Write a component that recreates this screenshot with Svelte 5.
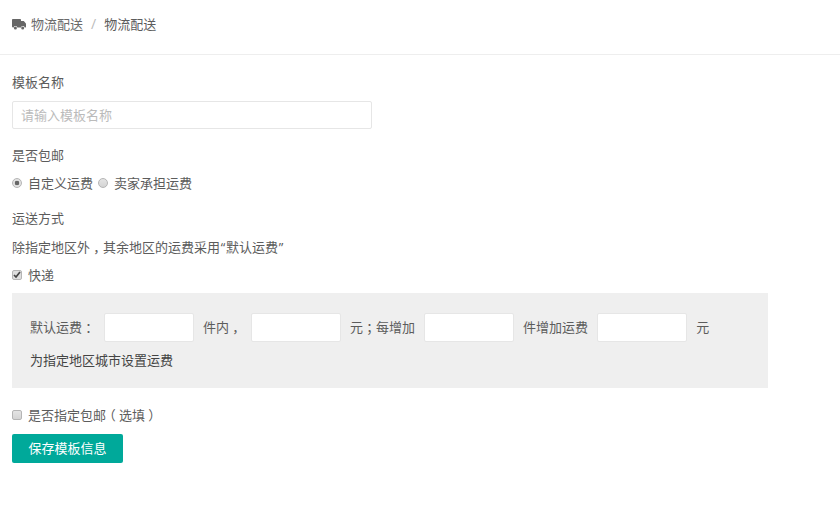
<script>
	let name = '';
	let freeShipping = 'custom';
	let express = true;
	let conditional = false;
</script>

<div class="page">
	<header class="crumbs">
		<svg class="truck" viewBox="0 0 14 11" width="14" height="11" aria-hidden="true">
			<path fill="#666" d="M0 .8C0 .4.4 0 .8 0h7.4c.4 0 .8.4.8.8V2h2.3c.3 0 .5.1.7.3l1.7 2c.2.2.3.4.3.7v2.9c0 .3-.2.5-.5.5h-.8a1.9 1.9 0 0 0-3.7 0H5.3a1.9 1.9 0 0 0-3.7 0H.8c-.4 0-.8-.4-.8-.8z" />
			<circle fill="#666" cx="3.4" cy="8.9" r="1.5" />
			<circle fill="#666" cx="10.7" cy="8.9" r="1.5" />
		</svg>
		<span class="crumb">物流配送</span>
		<span class="sep">/</span>
		<span class="crumb current">物流配送</span>
	</header>

	<form class="form" on:submit|preventDefault>
		<div class="label first">模板名称</div>
		<input class="name-input" type="text" placeholder="请输入模板名称" bind:value={name} />

		<div class="label free">是否包邮</div>
		<div class="radios">
			<label class="option">
				<input type="radio" value="custom" bind:group={freeShipping} />
				<span>自定义运费</span>
			</label>
			<label class="option">
				<input type="radio" value="seller" bind:group={freeShipping} />
				<span>卖家承担运费</span>
			</label>
		</div>

		<div class="label method">运送方式</div>
		<div class="line">除指定地区外<span class="mark">，</span>其余地区的运费采用<span class="quote">“</span>默认运费<span class="quote">”</span></div>
		<label class="option line">
			<input type="checkbox" bind:checked={express} />
			<span>快递</span>
		</label>

		<section class="fee-box">
			<div class="fee-row">
				<span class="fee-text">默认运费<span class="mark">：</span></span>
				<input class="fee-input" type="text" />
				<span class="fee-text">件内<span class="mark">，</span></span>
				<input class="fee-input" type="text" />
				<span class="fee-text">元<span class="mark">；</span>每增加</span>
				<input class="fee-input" type="text" />
				<span class="fee-text">件增加运费</span>
				<input class="fee-input" type="text" />
				<span class="fee-text">元</span>
			</div>
			<div class="fee-link">为指定地区城市设置运费</div>
		</section>

		<label class="option conditional">
			<input type="checkbox" bind:checked={conditional} />
			<span>是否指定包邮<span class="mark">（</span>选填<span class="mark">）</span></span>
		</label>

		<button class="save" type="submit">保存模板信息</button>
	</form>
</div>

<style>
	:global(body) {
		margin: 0;
		background: #fff;
	}

	.page {
		min-height: 527px;
		font-family: "Open Sans", "Noto Sans CJK SC", sans-serif;
		font-size: 13px;
		line-height: 20px;
		color: #5c5c5c;
	}

	.crumbs {
		display: flex;
		align-items: center;
		height: 48px;
		padding: 0 12px 6px;
		border-bottom: 1px solid #eee;
	}

	.truck {
		margin-right: 5px;
	}

	.crumb {
		color: #6a6a6a;
	}

	.crumb.current {
		color: #5c5c5c;
	}

	.sep {
		margin: 0 8px;
		font-size: 14px;
		color: #bbb;
	}

	/* full-width punctuation sits centred in the em box in the original */
	.mark {
		padding: 0 3.25px;
		font-feature-settings: "halt";
	}

	.quote {
		margin: 0 0.7px;
	}

	.form {
		display: flex;
		flex-direction: column;
		align-items: flex-start;
		padding: 17px 12px 0;
	}

	.label.free {
		margin-top: 16px;
	}

	.label.method {
		margin-top: 15px;
	}

	.name-input {
		width: 360px;
		height: 28px;
		margin-top: 9px;
		padding: 0 8px;
		box-sizing: border-box;
		border: 1px solid #e6e6e6;
		border-radius: 2px;
		font: inherit;
		color: #555;
		outline: none;
	}

	.name-input::placeholder {
		color: #bbb;
	}

	.radios {
		display: flex;
		gap: 5px;
		margin-top: 8px;
	}

	.option {
		display: flex;
		align-items: center;
	}

	.option input {
		appearance: none;
		width: 10px;
		height: 10px;
		margin: 0 6px 0 0;
		box-sizing: border-box;
		border: 1px solid #b5b5b5;
		background: linear-gradient(#e4e4e4, #d4d4d4);
	}

	.option input[type='radio'] {
		border-radius: 50%;
	}

	.option input[type='radio']:checked {
		background: radial-gradient(circle, #666 0 2px, #e2e2e2 2.6px);
	}

	.option input[type='checkbox'] {
		border-radius: 2px;
	}

	.option input[type='checkbox']:checked {
		background:
			url("data:image/svg+xml,%3Csvg xmlns='http://www.w3.org/2000/svg' viewBox='0 0 8 8'%3E%3Cpath d='M1 4l2 2 4-5' fill='none' stroke='%23444' stroke-width='1.7'/%3E%3C/svg%3E") center / 8px 8px no-repeat,
			#dedede;
	}

	.line {
		margin-top: 9px;
	}

	.line + .line {
		margin-top: 8px;
	}

	.fee-box {
		width: 756px;
		height: 95px;
		margin-top: 8px;
		padding: 20px 18px 0;
		box-sizing: border-box;
		background: #efefef;
	}

	.fee-row {
		display: flex;
		align-items: center;
		height: 29px;
	}

	.fee-text {
		padding-bottom: 2px;
		white-space: nowrap;
	}

	.fee-input {
		width: 90px;
		height: 29px;
		margin: 0 9px;
		box-sizing: border-box;
		border: 1px solid #e6e6e6;
		border-radius: 2px;
		background: #fff;
		outline: none;
	}

	.fee-link {
		margin-top: 8px;
		color: #444;
	}

	.conditional {
		margin-top: 17px;
	}

	.save {
		width: 111px;
		height: 29px;
		margin-top: 9px;
		padding: 0 0 2px;
		border: none;
		border-radius: 2px;
		background: #00a99a;
		color: #fff;
		font: inherit;
		cursor: pointer;
	}
</style>
